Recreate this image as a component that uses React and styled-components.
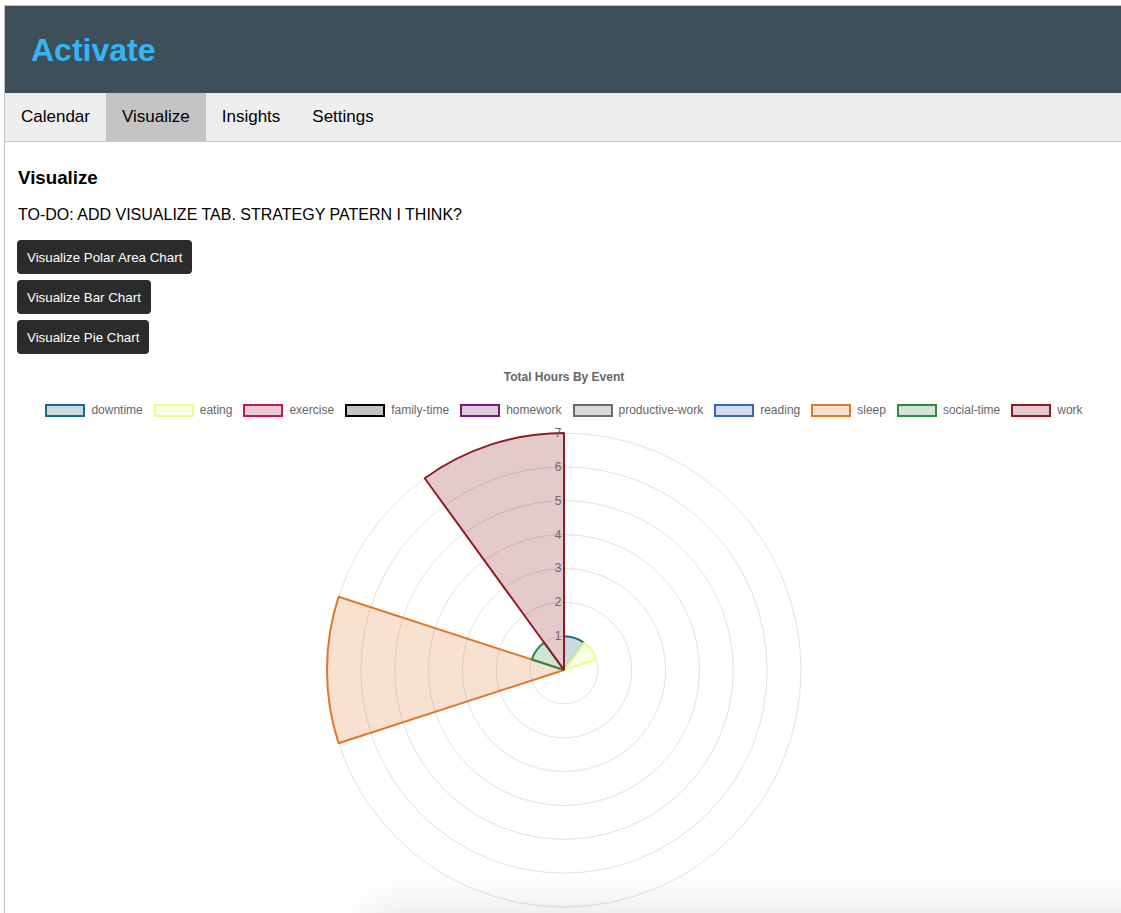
import React from "react";
import styled, { createGlobalStyle } from "styled-components";

const GlobalStyle = createGlobalStyle`
  html, body {
    margin: 0;
    padding: 0;
    overflow: hidden;
    background: #ffffff;
    font-family: "Liberation Sans", Arial, Helvetica, sans-serif;
  }
`;

const Frame = styled.div`
  margin: 5px 0 0 4px;
  width: 1118px;
  border-left: 1px solid #c2c2c2;
  border-top: 1px solid #c2c2c2;
  min-height: 1000px;
`;

const Header = styled.header`
  height: 87px;
  background: #3d5059;
  display: flex;
  align-items: center;
  padding-left: 26px;
`;

const Brand = styled.h1`
  margin: 0;
  font-size: 32px;
  font-weight: 700;
  color: #36b5f6;
  line-height: 1;
  padding-top: 1px;
`;

const TabBar = styled.nav`
  display: flex;
  height: 48px;
  background: #eeeeee;
  border-bottom: 1px solid #c4c4c4;
`;

const Tab = styled.div`
  display: flex;
  align-items: center;
  padding: 0 16px;
  font-size: 17px;
  color: #000;
  background: ${(p) => (p.$active ? "#c4c4c4" : "transparent")};
`;

const Content = styled.main`
  padding: 6px 13px 0 13px;
`;

const Heading = styled.h3`
  margin: 19px 0 17px;
  font-size: 18.72px;
  font-weight: 700;
  color: #000;
`;

const Note = styled.p`
  margin: 0 0 16px;
  font-size: 16px;
  color: #000;
`;

const ButtonStack = styled.div`
  display: flex;
  flex-direction: column;
  align-items: flex-start;
  gap: 6px;
  margin-left: -1px;
`;

const DarkButton = styled.button`
  height: 34px;
  padding: 0 10px;
  border: none;
  border-radius: 4px;
  background: #2b2b2b;
  color: #ffffff;
  font-family: "Liberation Sans", Arial, sans-serif;
  font-size: 13.33px;
  cursor: pointer;
`;

const ChartWrap = styled.section`
  width: 1092px;
  margin-top: 15px;
  display: flex;
  flex-direction: column;
  align-items: center;
`;

const ChartTitle = styled.div`
  height: 16px;
  line-height: 16px;
  font-size: 12px;
  font-weight: 700;
  color: #666666;
`;

const Legend = styled.div`
  margin-top: 19px;
  display: flex;
  justify-content: center;
  gap: 11px;
  height: 12px;
`;

const LegendItem = styled.div`
  display: flex;
  align-items: center;
  gap: 6px;
  font-size: 12px;
  color: #666666;
  line-height: 12px;
`;

const LegendBox = styled.span`
  display: inline-block;
  box-sizing: border-box;
  width: 40px;
  height: 13px;
  border: 2px solid ${(p) => p.$stroke};
  background: ${(p) => p.$fill};
`;

const ChartSvg = styled.svg`
  display: block;
  width: 1092px;
  height: 520px;
`;

const BottomShade = styled.div`
  position: fixed;
  left: 370px;
  right: -60px;
  bottom: -100px;
  height: 100px;
  box-shadow: 0 0 50px 0 rgba(0, 0, 0, 0.13);
  background: #fff;
`;

const data = [
  { label: "downtime", value: 1, stroke: "#1b6a8a", fill: "rgba(27,106,138,0.24)" },
  { label: "eating", value: 1, stroke: "#e9ff8c", fill: "rgba(233,255,140,0.24)" },
  { label: "exercise", value: 0, stroke: "#c11856", fill: "rgba(193,24,86,0.24)" },
  { label: "family-time", value: 0, stroke: "#000000", fill: "rgba(0,0,0,0.23)" },
  { label: "homework", value: 0, stroke: "#761d74", fill: "rgba(118,29,116,0.24)" },
  { label: "productive-work", value: 0, stroke: "#6b6b6b", fill: "rgba(107,107,107,0.26)" },
  { label: "reading", value: 0, stroke: "#3866b8", fill: "rgba(56,102,184,0.22)" },
  { label: "sleep", value: 7, stroke: "#e0772a", fill: "rgba(224,119,42,0.22)" },
  { label: "social-time", value: 1, stroke: "#2f8a47", fill: "rgba(47,138,71,0.22)" },
  { label: "work", value: 7, stroke: "#8f1c24", fill: "rgba(143,28,36,0.23)" },
];

const CX = 546;
const CY = 254;
const UNIT = 33.86;

function sectorPath(i, value) {
  const r = value * UNIT;
  const a0 = ((-90 + 36 * i) * Math.PI) / 180;
  const a1 = ((-90 + 36 * (i + 1)) * Math.PI) / 180;
  const x0 = CX + r * Math.cos(a0);
  const y0 = CY + r * Math.sin(a0);
  const x1 = CX + r * Math.cos(a1);
  const y1 = CY + r * Math.sin(a1);
  return `M${CX},${CY} L${x0},${y0} A${r},${r} 0 0 1 ${x1},${y1} Z`;
}

function PolarChart() {
  const rings = [1, 2, 3, 4, 5, 6, 7];
  return (
    <ChartSvg viewBox="0 0 1092 520">
      {rings.map((k) => (
        <circle key={k} cx={CX} cy={CY} r={k * UNIT} fill="none" stroke="#e2e2e2" strokeWidth="1" />
      ))}
      {data.map((d, i) =>
        d.value > 0 ? (
          <path key={d.label} d={sectorPath(i, d.value)} fill={d.fill} stroke={d.stroke} strokeWidth="2" strokeLinejoin="bevel" />
        ) : null
      )}
      {rings.map((k) => (
        <text
          key={"t" + k}
          x={CX - 6}
          y={CY - k * UNIT}
          textAnchor="middle"
          dominantBaseline="central"
          fontFamily="Liberation Sans, Arial, sans-serif"
          fontSize="12"
          fill="#666666"
        >
          {k}
        </text>
      ))}
    </ChartSvg>
  );
}

export default function App() {
  return (
    <>
      <GlobalStyle />
      <Frame>
        <Header>
          <Brand>Activate</Brand>
        </Header>
        <TabBar>
          <Tab>Calendar</Tab>
          <Tab $active>Visualize</Tab>
          <Tab>Insights</Tab>
          <Tab>Settings</Tab>
        </TabBar>
        <Content>
          <Heading>Visualize</Heading>
          <Note>TO-DO: ADD VISUALIZE TAB. STRATEGY PATERN I THINK?</Note>
          <ButtonStack>
            <DarkButton>Visualize Polar Area Chart</DarkButton>
            <DarkButton>Visualize Bar Chart</DarkButton>
            <DarkButton>Visualize Pie Chart</DarkButton>
          </ButtonStack>
          <ChartWrap>
            <ChartTitle>Total Hours By Event</ChartTitle>
            <Legend>
              {data.map((d) => (
                <LegendItem key={d.label}>
                  <LegendBox $stroke={d.stroke} $fill={d.fill} />
                  {d.label}
                </LegendItem>
              ))}
            </Legend>
            <PolarChart />
          </ChartWrap>
        </Content>
      </Frame>
      <BottomShade />
    </>
  );
}
